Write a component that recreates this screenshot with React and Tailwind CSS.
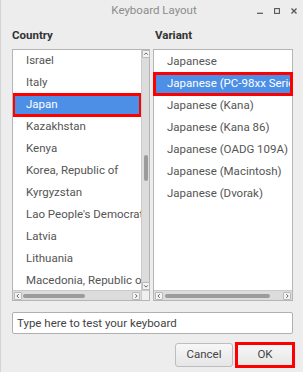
import React from 'react';

const countries = [
    'Israel',
    'Italy',
    'Japan',
    'Kazakhstan',
    'Kenya',
    'Korea, Republic of',
    'Kyrgyzstan',
    "Lao People's Democratic Republic",
    'Latvia',
    'Lithuania',
    'Macedonia, Republic of',
];

const variants = [
    'Japanese',
    'Japanese (PC-98xx Series)',
    'Japanese (Kana)',
    'Japanese (Kana 86)',
    'Japanese (OADG 109A)',
    'Japanese (Macintosh)',
    'Japanese (Dvorak)',
];

const Chevron = ({ dir }) => {
    const paths = {
        up: 'M1.5 5 L4 2.5 L6.5 5',
        down: 'M1.5 3 L4 5.5 L6.5 3',
        left: 'M5 1.5 L2.5 4 L5 6.5',
        right: 'M3 1.5 L5.5 4 L3 6.5',
    };
    return (
        <svg width="8" height="8" viewBox="0 0 8 8">
            <path d={paths[dir]} fill="none" stroke="#555" strokeWidth="1.2" />
        </svg>
    );
};

const ArrowBox = ({ dir }) => (
    <div className="w-[8px] h-[8px] flex items-center justify-center bg-[#f4f4f4] border border-[#b9b9b9] rounded-[1px] shrink-0">
        <Chevron dir={dir} />
    </div>
);

const Row = ({ label, selected }) => (
    <div className="relative h-[22px] shrink-0">
        <div
            className={
                'h-full flex items-center pl-[13px] whitespace-nowrap overflow-hidden ' +
                (selected ? 'bg-[#4d8fe6] text-white' : 'text-[#555]')
            }
        >
            {label}
        </div>
        {selected && <div className="absolute -inset-[1px] border-[3px] border-[#ff0000] pointer-events-none" />}
    </div>
);

const HScroll = ({ thumbLeft, thumbWidth }) => (
    <div className="h-[10px] flex items-center px-[1px] bg-[#dcdcdc] border-t border-[#cacaca]">
        <ArrowBox dir="left" />
        <div className="flex-1 h-full flex items-center">
            <div className={'h-[4px] rounded-full bg-[#9b9b9b] ' + thumbLeft + ' ' + thumbWidth} />
        </div>
        <ArrowBox dir="right" />
    </div>
);

const App = () => {
    return (
        <div className="w-[303px] h-[372px] bg-[#ededed] border-l border-[#d4d4d4] flex flex-col font-['Roboto',sans-serif] text-[11.5px] overflow-hidden">
            {/* Title bar */}
            <div className="h-[22px] grid grid-cols-[1fr_auto_1fr] items-center">
                <div />
                <div className="text-[#8c8c8c] text-[11.5px] pl-[4px]">Keyboard Layout</div>
                <div className="flex items-center justify-end gap-[11px] pr-[6px]">
                    <svg width="6" height="6" viewBox="0 0 6 6">
                        <path d="M0 5.3 H6" stroke="#555" strokeWidth="1.2" />
                    </svg>
                    <svg width="6" height="6" viewBox="0 0 6 6">
                        <rect x="0.6" y="0.6" width="4.8" height="4.8" fill="none" stroke="#555" strokeWidth="1.1" />
                    </svg>
                    <svg width="6" height="6" viewBox="0 0 6 6">
                        <path d="M0.5 0.5 L5.5 5.5 M5.5 0.5 L0.5 5.5" stroke="#555" strokeWidth="1.3" />
                    </svg>
                </div>
            </div>

            {/* Column labels */}
            <div className="h-[27px] flex items-center pl-[11px] font-bold text-[#333]">
                <div className="w-[143px]">Country</div>
                <div>Variant</div>
            </div>

            {/* Lists */}
            <div className="flex gap-[3px] pl-[11px]">
                {/* Country list */}
                <div className="w-[138px] h-[252px] bg-white border border-[#b5b5b5] flex flex-col">
                    <div className="flex flex-1 min-h-0">
                        <div className="w-[128px] flex flex-col overflow-hidden">
                            {countries.map((c) => (
                                <Row key={c} label={c} selected={c === 'Japan'} />
                            ))}
                        </div>
                        <div className="w-[8px] flex flex-col items-center bg-[#dcdcdc] border-l border-[#cacaca]">
                            <ArrowBox dir="up" />
                            <div className="flex-1 w-full flex flex-col items-center pt-[97px]">
                                <div className="w-[4px] h-[26px] rounded-full bg-[#9b9b9b]" />
                            </div>
                            <ArrowBox dir="down" />
                        </div>
                    </div>
                    <div className="flex">
                        <div className="w-[128px]">
                            <HScroll thumbLeft="ml-[1px]" thumbWidth="w-[62px]" />
                        </div>
                        <div className="w-[8px] h-[10px] bg-[#f0f0f0] border-t border-l border-[#cacaca]" />
                    </div>
                </div>

                {/* Variant list */}
                <div className="w-[140px] h-[252px] bg-white border border-[#b5b5b5] flex flex-col">
                    <div className="flex-1 min-h-0 flex flex-col pt-[1px]">
                        {variants.map((v) => (
                            <Row key={v} label={v} selected={v === 'Japanese (PC-98xx Series)'} />
                        ))}
                    </div>
                    <HScroll thumbLeft="ml-[2px]" thumbWidth="w-[105px]" />
                </div>
            </div>

            {/* Test input */}
            <div className="pl-[11px] pr-[10px] mt-[11px]">
                <input
                    type="text"
                    placeholder="Type here to test your keyboard"
                    className="w-full h-[22px] bg-white border border-[#b0b0b0] rounded-[2px] px-[4px] text-[11.5px] text-[#333] placeholder:text-[#444] outline-none font-['Roboto',sans-serif]"
                />
            </div>

            {/* Buttons */}
            <div className="flex justify-end gap-[3px] pr-[9px] mt-[9px]">
                <button className="w-[58px] h-[24px] rounded-[3px] border border-[#bdbdbd] bg-gradient-to-b from-[#f7f7f7] to-[#e6e6e6] text-[#444]">
                    Cancel
                </button>
                <div className="relative">
                    <button className="w-[58px] h-[24px] rounded-[3px] border border-[#bdbdbd] bg-gradient-to-b from-[#f7f7f7] to-[#e6e6e6] text-[#444]">
                        OK
                    </button>
                    <div className="absolute -inset-[1px] border-[3px] border-[#ff0000] pointer-events-none" />
                </div>
            </div>
        </div>
    );
};

export default App;
